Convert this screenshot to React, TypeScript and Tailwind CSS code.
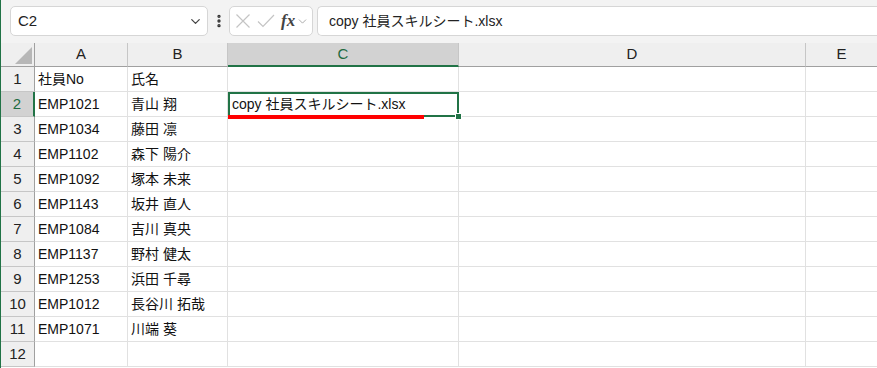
import { ChevronDown, EllipsisVertical } from 'lucide-react'

const FONT = { fontFamily: '"Liberation Sans", "Noto Sans CJK JP", sans-serif' }

const columns = [
  { key: 'A', width: 'w-[93px]' },
  { key: 'B', width: 'w-[100px]' },
  { key: 'C', width: 'w-[231px]' },
  { key: 'D', width: 'w-[347px]' },
  { key: 'E', width: 'w-[72px]' },
]

const rows: [string, string][] = [
  ['社員No', '氏名'],
  ['EMP1021', '青山 翔'],
  ['EMP1034', '藤田 凛'],
  ['EMP1102', '森下 陽介'],
  ['EMP1092', '塚本 未来'],
  ['EMP1143', '坂井 直人'],
  ['EMP1084', '吉川 真央'],
  ['EMP1137', '野村 健太'],
  ['EMP1253', '浜田 千尋'],
  ['EMP1012', '長谷川 拓哉'],
  ['EMP1071', '川端 葵'],
  ['', ''],
]

function FormulaBar() {
  return (
    <div className="flex h-[43px] items-start bg-[#f3f3f3] pt-[6px]">
      {/* 名前ボックス */}
      <div className="ml-[9px] flex h-[30px] w-[198px] items-center justify-between rounded-[5px] border border-[#d6d6d6] bg-white pl-[7px] pr-[4px]">
        <span className="text-[15px] text-[#222]">C2</span>
        <ChevronDown className="h-[15px] w-[15px] text-[#444]" strokeWidth={2} />
      </div>
      <div className="flex h-[30px] w-[21px] items-center justify-center">
        <EllipsisVertical className="h-[16px] w-[16px] text-[#333]" strokeWidth={3} />
      </div>
      {/* fx */}
      <div className="flex h-[30px] w-[84px] items-center rounded-[5px] border border-[#d6d6d6] bg-white pl-[5px]">
        <svg width="16" height="16" viewBox="0 0 16 16" className="text-[#c4c4c4]">
          <path d="M1.5 1.5 L14.5 14.5 M14.5 1.5 L1.5 14.5" stroke="currentColor" strokeWidth="1.2" fill="none" />
        </svg>
        <svg width="18" height="16" viewBox="0 0 18 16" className="ml-[6px] text-[#c4c4c4]">
          <path d="M1 8.5 L6 13.5 L17 2" stroke="currentColor" strokeWidth="1.2" fill="none" />
        </svg>
        <span
          className="ml-[6px] text-[17px] font-bold italic text-[#444]"
          style={{ fontFamily: '"Liberation Serif", serif' }}
        >
          fx
        </span>
        <ChevronDown className="ml-[1px] h-[13px] w-[13px] text-[#999]" strokeWidth={1.5} />
      </div>
      {/* 数式入力 */}
      <div className="ml-[4px] flex h-[30px] flex-1 items-center rounded-l-[5px] border border-r-0 border-[#d6d6d6] bg-white pl-[11px]">
        <span className="text-[14px] text-[#222]">copy 社員スキルシート.xlsx</span>
      </div>
    </div>
  )
}

function HeaderRow() {
  return (
    <div className="flex h-[24px] bg-[#efefef]">
      <div className="relative w-[34px] shrink-0 border-b border-r border-b-[#a0a0a0] border-r-[#a0a0a0]">
        <div className="absolute bottom-[2px] right-[2px] h-0 w-0 border-b-[17px] border-l-[17px] border-b-[#b7b7b7] border-l-transparent" />
      </div>
      {columns.map((c) =>
        c.key === 'C' ? (
          <div
            key={c.key}
            className={`${c.width} flex shrink-0 items-center justify-center border-b-2 border-r border-b-[#217346] border-r-[#c6c6c6] bg-[#d2d2d2] text-[15px] text-[#1e6b41]`}
          >
            {c.key}
          </div>
        ) : (
          <div
            key={c.key}
            className={`${c.width} flex shrink-0 items-center justify-center border-b border-r border-b-[#a0a0a0] border-r-[#c6c6c6] text-[15px] text-[#222]`}
          >
            {c.key}
          </div>
        )
      )}
    </div>
  )
}

export default function App() {
  return (
    <div className="h-[368px] w-[877px] overflow-hidden border-l border-l-[#217346] bg-white" style={FONT}>
      <FormulaBar />
      <HeaderRow />
      {rows.map(([a, b], i) => {
        const rowNo = i + 1
        const active = rowNo === 2
        return (
          <div key={rowNo} className="flex h-[25px]">
            <div
              className={`flex w-[34px] shrink-0 items-center justify-center border-b border-b-[#c6c6c6] text-[15px] ${
                active
                  ? 'border-r-2 border-r-[#217346] bg-[#d2d2d2] text-[#1e6b41]'
                  : 'border-r border-r-[#a0a0a0] bg-[#efefef] text-[#222]'
              }`}
            >
              {rowNo}
            </div>
            <div className="flex w-[93px] shrink-0 items-center border-b border-r border-[#e1e1e1] pl-[3px] text-[14px] text-[#111]">
              {a}
            </div>
            <div className="flex w-[100px] shrink-0 items-center border-b border-r border-[#e1e1e1] pl-[3px] text-[14px] text-[#111]">
              {b}
            </div>
            {active ? (
              <div className="relative flex w-[231px] shrink-0 items-center border-2 border-[#217346] pl-[2px] text-[14px] text-[#111]">
                copy 社員スキルシート.xlsx
                <div className="absolute bottom-[-4px] left-[-2px] h-[4px] w-[196px] bg-[#ff0000]" />
                <div className="absolute bottom-[-5px] right-[-5px] h-[7px] w-[7px] border border-white bg-[#217346]" />
              </div>
            ) : (
              <div className="w-[231px] shrink-0 border-b border-r border-[#e1e1e1]" />
            )}
            <div className="w-[347px] shrink-0 border-b border-r border-[#e1e1e1]" />
            <div className="w-[72px] shrink-0 border-b border-r border-[#e1e1e1]" />
          </div>
        )
      })}
    </div>
  )
}
